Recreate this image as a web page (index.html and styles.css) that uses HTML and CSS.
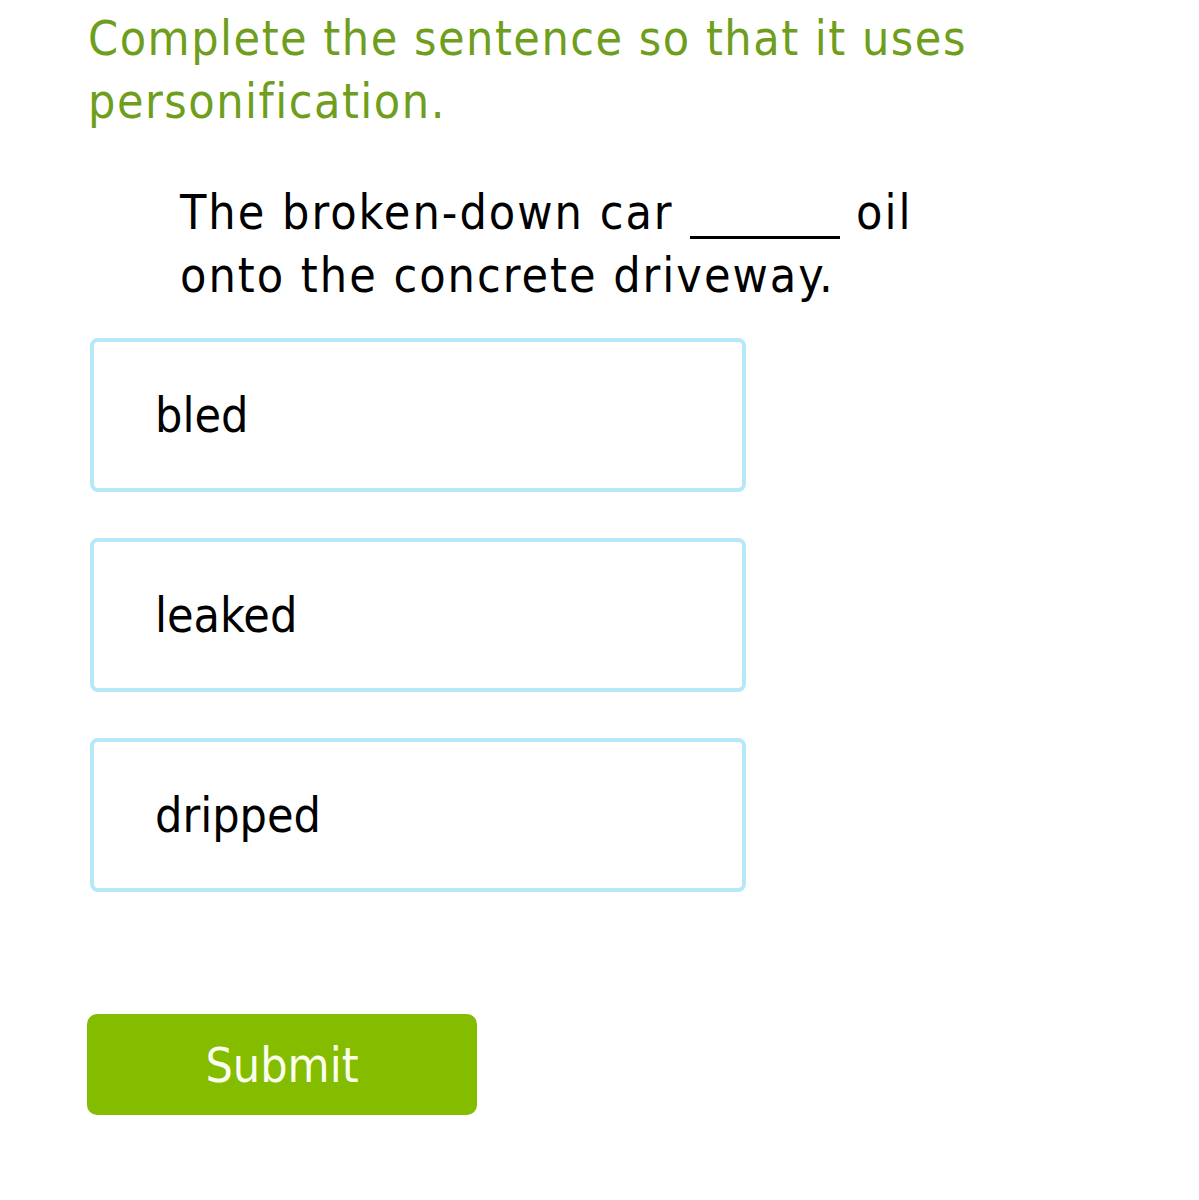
FILE: index.html
```html
<!DOCTYPE html>
<html lang="en">
<head>
<meta charset="utf-8">
<title>Personification</title>
<link rel="stylesheet" href="styles.css">
</head>
<body>
<main class="page">
  <h1 class="prompt">Complete the sentence so that it uses personification.</h1>
  <p class="sentence">The broken-down car <span class="blank"></span> oil<br>onto the concrete driveway.</p>
  <div class="options">
    <button class="option" type="button">bled</button>
    <button class="option" type="button">leaked</button>
    <button class="option" type="button">dripped</button>
  </div>
  <button class="submit" type="button">Submit</button>
</main>
</body>
</html>
```

FILE: styles.css
```css
html, body {
  margin: 0;
  padding: 0;
  background: #ffffff;
}

.page {
  padding: 7px 0 0 88px;
  font-family: "DejaVu Sans Condensed", "DejaVu Sans", Verdana, sans-serif;
  font-stretch: condensed;
}

.prompt {
  margin: 0;
  width: 960px;
  font-size: 48px;
  font-weight: normal;
  line-height: 63px;
  letter-spacing: 1.5px;
  color: #6e9e1c;
}

.sentence {
  margin: 48px 0 0 92px;
  width: 800px;
  font-size: 48px;
  line-height: 63px;
  letter-spacing: 2px;
  color: #000000;
}

.blank {
  display: inline-block;
  width: 150px;
  height: 3px;
  margin: 0 0 0 1px;
  background: #000000;
  vertical-align: -10px;
}

.options {
  display: flex;
  flex-direction: column;
  gap: 46px;
  margin: 31px 0 0 2px;
}

.option {
  box-sizing: border-box;
  width: 656px;
  height: 154px;
  padding: 0 0 0 61px;
  border: 4px solid #b5e9f9;
  border-radius: 8px;
  background: #ffffff;
  font: inherit;
  font-size: 48px;
  color: #000000;
  text-align: left;
}

.submit {
  display: block;
  box-sizing: border-box;
  width: 390px;
  height: 101px;
  margin: 122px 0 0 -1px;
  border: none;
  border-radius: 10px;
  background: #84bc00;
  font: inherit;
  font-size: 48px;
  color: #fbffee;
}
```
